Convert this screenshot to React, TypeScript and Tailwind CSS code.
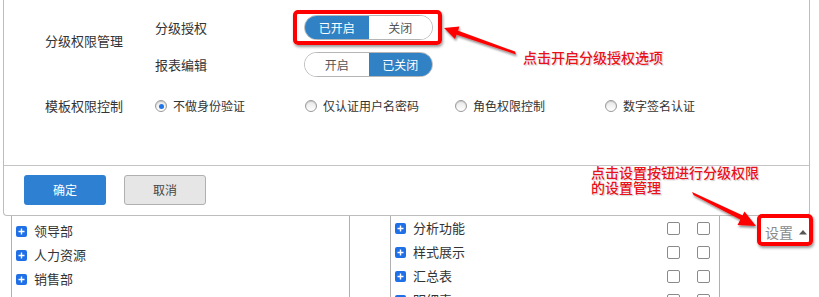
import React from "react";

const font = "font-['Noto_Sans_CJK_SC','Noto_Sans',sans-serif]";

function Toggle({ on, onText, offText }: { on: boolean; onText: string; offText: string }) {
  return (
    <div className="flex h-[25px] w-[129px] overflow-hidden rounded-full border border-[#b5b5b5] text-[12px]">
      <div
        className={
          "flex w-1/2 items-center justify-center " +
          (on ? "bg-[#3182c4] text-white" : "bg-white text-[#555]")
        }
      >
        {onText}
      </div>
      <div
        className={
          "flex w-1/2 items-center justify-center " +
          (on ? "bg-white text-[#555]" : "bg-[#3182c4] text-white")
        }
      >
        {offText}
      </div>
    </div>
  );
}

function Radio({ label, checked }: { label: string; checked?: boolean }) {
  return (
    <div className="flex w-[150px] items-center gap-[6px] text-[12px] text-[#333]">
      <span className="flex h-[12px] w-[12px] items-center justify-center rounded-full border border-[#9a9a9a] bg-gradient-to-b from-[#e8e8e8] to-white shadow-[inset_0_1px_1px_rgba(0,0,0,0.15)]">
        {checked && <span className="h-[5px] w-[5px] rounded-full bg-[#1e74e8]" />}
      </span>
      <span>{label}</span>
    </div>
  );
}

function Plus() {
  return (
    <span className="flex h-[11px] w-[11px] items-center justify-center rounded-[2px] bg-[#1f6fe6]">
      <svg width="9" height="9" viewBox="0 0 9 9">
        <path d="M4.5 1.5v6M1.5 4.5h6" stroke="#fff" strokeWidth="1.4" />
      </svg>
    </span>
  );
}

function Check() {
  return <span className="h-[13px] w-[13px] rounded-[2px] border border-[#8a8a8a] bg-white" />;
}

export default function App() {
  const dept = ["领导部", "人力资源", "销售部"];
  const funcs = ["分析功能", "样式展示", "汇总表", "明细表"];

  return (
    <div className={"relative h-[297px] w-[819px] overflow-hidden bg-white " + font}>
      {/* 弹窗 */}
      <div className="ml-[3px] flex h-[216px] w-[807px] flex-col rounded-b-[4px] border-x border-b border-[#bdbdbd]">
        <div className="h-[165px] pl-[41px] pt-[15px]">
          <div className="flex">
            <div className="w-[110px] pt-[16px] text-[13px] leading-[20px] text-[#333]">分级权限管理</div>
            <div className="flex flex-col gap-[12px]">
              <div className="flex items-center">
                <span className="w-[149px] text-[13px] text-[#333]">分级授权</span>
                <Toggle on onText="已开启" offText="关闭" />
              </div>
              <div className="flex items-center">
                <span className="w-[149px] text-[13px] text-[#333]">报表编辑</span>
                <Toggle on={false} onText="开启" offText="已关闭" />
              </div>
            </div>
          </div>
          <div className="mt-[19px] flex h-[20px] items-center">
            <div className="w-[110px] text-[13px] text-[#333]">模板权限控制</div>
            <Radio label="不做身份验证" checked />
            <Radio label="仅认证用户名密码" />
            <Radio label="角色权限控制" />
            <Radio label="数字签名认证" />
          </div>
        </div>
        <div className="flex gap-[18px] border-t border-[#c4c4c4] pl-[20px] pt-[9px]">
          <button className="h-[30px] w-[82px] rounded-[3px] bg-[#2d80d2] text-[12px] text-white">确定</button>
          <button className="h-[30px] w-[82px] rounded-[3px] border border-[#b0b0b0] bg-[#e6e6e6] text-[12px] text-[#444]">
            取消
          </button>
        </div>
      </div>

      {/* 下方列表 */}
      <div className="ml-[11px] flex h-[81px]">
        <div className="w-[339px] border-x border-[#b0b0b0] pt-[3px]">
          {dept.map((d) => (
            <div key={d} className="flex h-[24px] items-center gap-[7px] pl-[4px] text-[13px] text-[#333]">
              <Plus />
              {d}
            </div>
          ))}
        </div>
        <div className="w-[40px]" />
        <div className="w-[330px] border-x border-[#b0b0b0]">
          {funcs.map((f) => (
            <div key={f} className="flex h-[24px] items-center pl-[4px] text-[13px] text-[#333]">
              <Plus />
              <span className="ml-[7px] w-[254px]">{f}</span>
              <Check />
              <span className="w-[17px]" />
              <Check />
            </div>
          ))}
        </div>
        <div className="ml-[45px] flex h-[32px] items-center gap-[6px] text-[14px] text-[#8a8a8a]">
          设置
          <svg width="8" height="6" viewBox="0 0 8 6">
            <path d="M0 5.5L4 1l4 4.5z" fill="#555" />
          </svg>
        </div>
      </div>

      {/* 标注 */}
      <div className="absolute left-[293px] top-[10px] h-[35px] w-[149px] rounded-[5px] border-[4px] border-[#f00] shadow-[1px_2px_3px_rgba(0,0,0,0.4)]" />
      <div className="absolute left-[757px] top-[214px] h-[32px] w-[56px] rounded-[5px] border-[4px] border-[#f00] shadow-[1px_2px_3px_rgba(0,0,0,0.4)]" />

      <svg className="pointer-events-none absolute left-0 top-0" width="819" height="297">
        <defs>
          <filter id="sh" x="-20%" y="-20%" width="140%" height="160%">
            <feDropShadow dx="1" dy="2" stdDeviation="1.2" floodColor="#000" floodOpacity="0.45" />
          </filter>
        </defs>
        <g filter="url(#sh)" fill="#f00">
          <polygon points="515,51.5 516,54.5 456,34.5 457.5,30.5" />
          <polygon points="444,28 459.5,26.5 455,39" />
          <polygon points="692,192 693.5,195 742,220.5 744,216" />
          <polygon points="756,226 737.5,225 744.5,211.5" />
        </g>
      </svg>

      <div className="absolute left-[523px] top-[49px] text-[14px] font-medium leading-[16px] text-[#e8121a] [text-shadow:0_0_2px_#fff,0_0_2px_#fff,1px_1px_1px_#bbb]">
        点击开启分级授权选项
      </div>
      <div className="absolute left-[591px] top-[165px] text-[14px] font-medium leading-[15px] text-[#e8121a] [text-shadow:0_0_2px_#fff,0_0_2px_#fff,1px_1px_1px_#bbb]">
        点击设置按钮进行分级权限
        <br />
        的设置管理
      </div>
    </div>
  );
}
